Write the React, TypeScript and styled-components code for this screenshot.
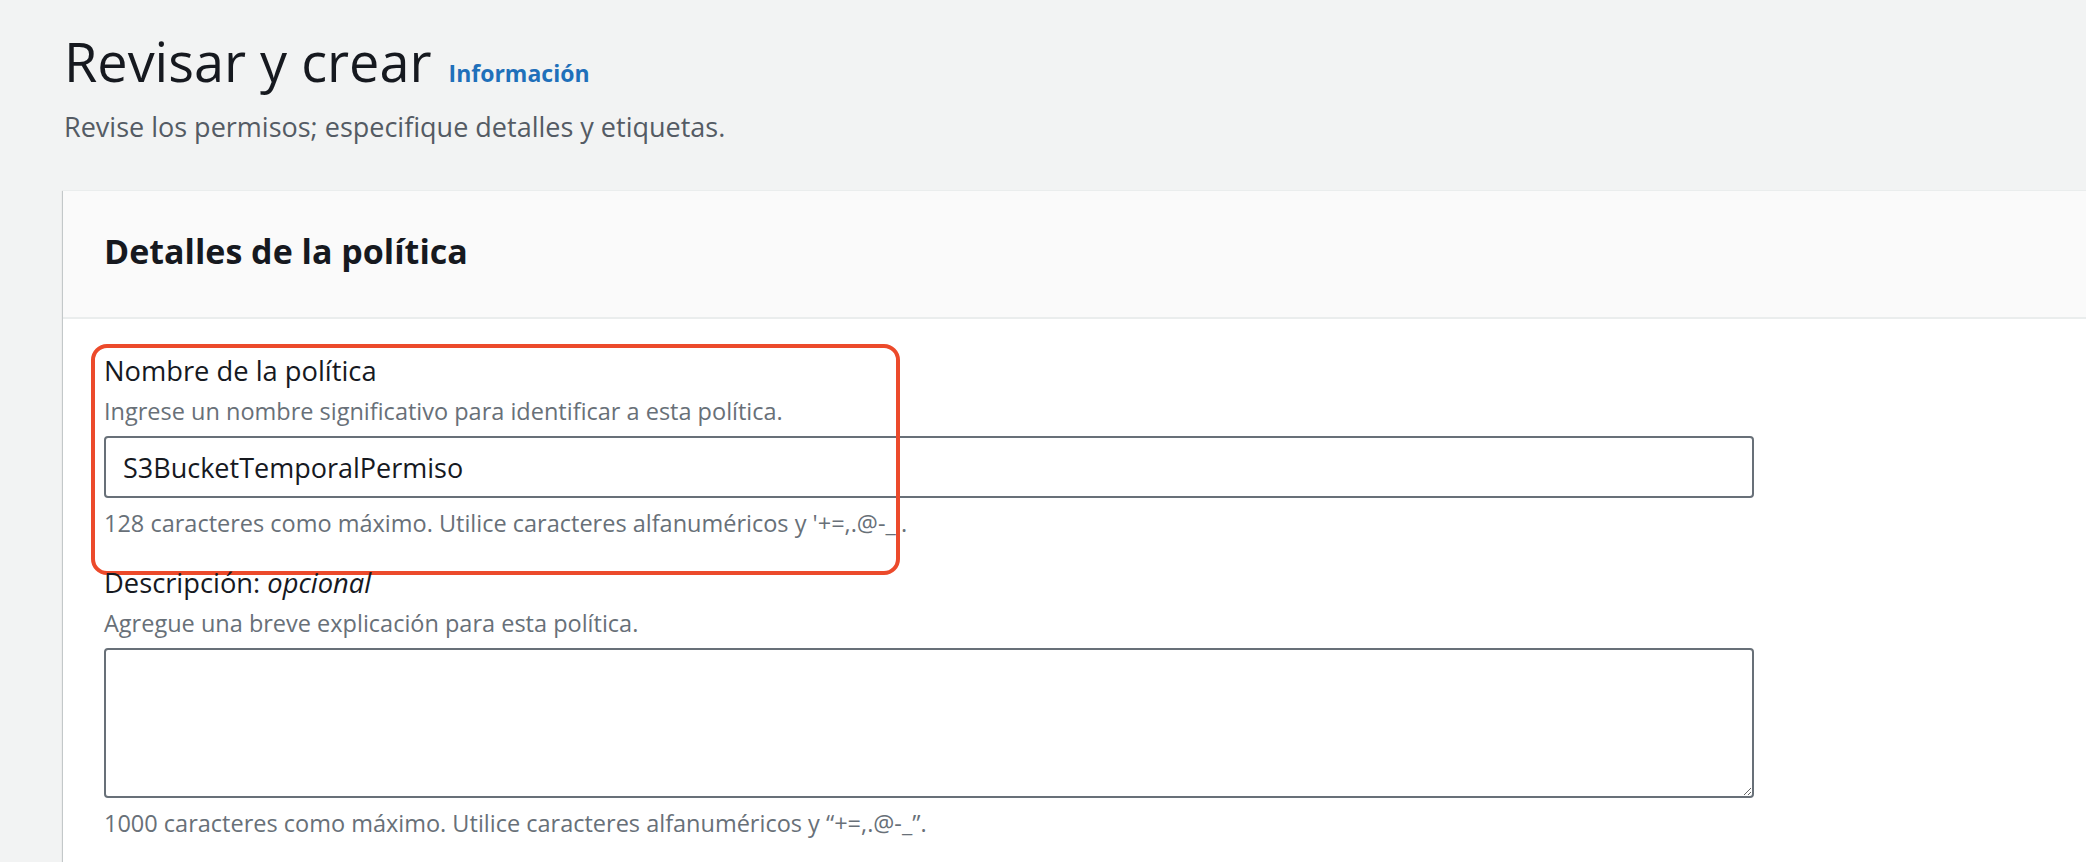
import styled, { createGlobalStyle } from "styled-components"

const GlobalStyle = createGlobalStyle`
  html, body {
    margin: 0;
    padding: 0;
    background: #f2f3f3;
    font-family: "Open Sans", "Liberation Sans", sans-serif;
    color: #16191f;
  }
  * {
    box-sizing: border-box;
  }
`

const Page = styled.div`
  display: flex;
  flex-direction: column;
  padding: 29px 0 0 63px;
  min-height: 862px;
  overflow: hidden;
`

const TitleRow = styled.div`
  display: flex;
  align-items: baseline;
  gap: 17px;
  padding-left: 1px;
`

const Title = styled.h1`
  margin: 0;
  font-size: 54px;
  line-height: 64px;
  font-weight: 400;
  color: #16191f;
`

const InfoLink = styled.a`
  font-size: 23px;
  font-weight: 700;
  color: #1f70ba;
  text-decoration: none;
`

const Subtitle = styled.p`
  margin: 16px 0 0 1px;
  font-size: 27px;
  line-height: 36px;
  color: #545b64;
`

const Card = styled.section`
  margin-top: 45px;
  background: #ffffff;
  box-shadow: 0 1px 1px 0 rgba(0, 28, 36, 0.3), -1px 1px 1px 0 rgba(0, 28, 36, 0.15);
  border-top: 1px solid #eaeded;
`

const CardHeader = styled.header`
  background: #fafafa;
  border-bottom: 2px solid #eaeded;
  padding: 40px 41px 46px;
`

const CardTitle = styled.h2`
  margin: 0;
  font-size: 34px;
  line-height: 40px;
  font-weight: 700;
  color: #16191f;
`

const CardBody = styled.div`
  display: flex;
  flex-direction: column;
  gap: 30px;
  padding: 36px 41px 40px;
`

const Field = styled.div`
  position: relative;
  display: flex;
  flex-direction: column;
`

const Highlight = styled.div`
  position: absolute;
  top: -11px;
  left: -13px;
  width: 809px;
  height: 231px;
  border: 4px solid #ec4a2b;
  border-radius: 16px;
  pointer-events: none;
`

const Label = styled.label`
  font-size: 27.3px;
  line-height: 32px;
  color: #16191f;

  em {
    font-style: italic;
  }
`

const Description = styled.div`
  margin-top: 10px;
  font-size: 23.5px;
  line-height: 28px;
  color: #687078;
`

const Constraint = styled.div`
  margin-top: 11px;
  font-size: 23.5px;
  line-height: 28px;
  color: #687078;
`

const TextInput = styled.input`
  margin-top: 11px;
  width: 1650px;
  height: 62px;
  padding: 0 17px;
  border: 2px solid #687078;
  border-radius: 4px;
  background: #ffffff;
  font-family: "Open Sans", "Liberation Sans", sans-serif;
  font-size: 27px;
  color: #16191f;
  outline: none;
`

const TextArea = styled.textarea`
  display: block;
  margin-top: 11px;
  width: 1650px;
  height: 150px;
  padding: 12px 17px;
  border: 2px solid #687078;
  border-radius: 4px;
  background: #ffffff;
  font-family: "Open Sans", "Liberation Sans", sans-serif;
  font-size: 27px;
  color: #16191f;
  outline: none;
`

const App = () => {
  return (
    <>
      <GlobalStyle />
      <Page>
        <TitleRow>
          <Title>Revisar y crear</Title>
          <InfoLink href="#">Información</InfoLink>
        </TitleRow>
        <Subtitle>Revise los permisos; especifique detalles y etiquetas.</Subtitle>

        <Card>
          <CardHeader>
            <CardTitle>Detalles de la política</CardTitle>
          </CardHeader>

          <CardBody>
            <Field>
              <Label htmlFor="policy-name">Nombre de la política</Label>
              <Description>Ingrese un nombre significativo para identificar a esta política.</Description>
              <TextInput id="policy-name" defaultValue="S3BucketTemporalPermiso" />
              <Constraint>128 caracteres como máximo. Utilice caracteres alfanuméricos y '+=,.@-_'.</Constraint>
              <Highlight />
            </Field>

            <Field>
              <Label htmlFor="policy-description">
                Descripción: <em>opcional</em>
              </Label>
              <Description>Agregue una breve explicación para esta política.</Description>
              <TextArea id="policy-description" />
              <Constraint>1000 caracteres como máximo. Utilice caracteres alfanuméricos y “+=,.@-_”.</Constraint>
            </Field>
          </CardBody>
        </Card>
      </Page>
    </>
  )
}

export default App
